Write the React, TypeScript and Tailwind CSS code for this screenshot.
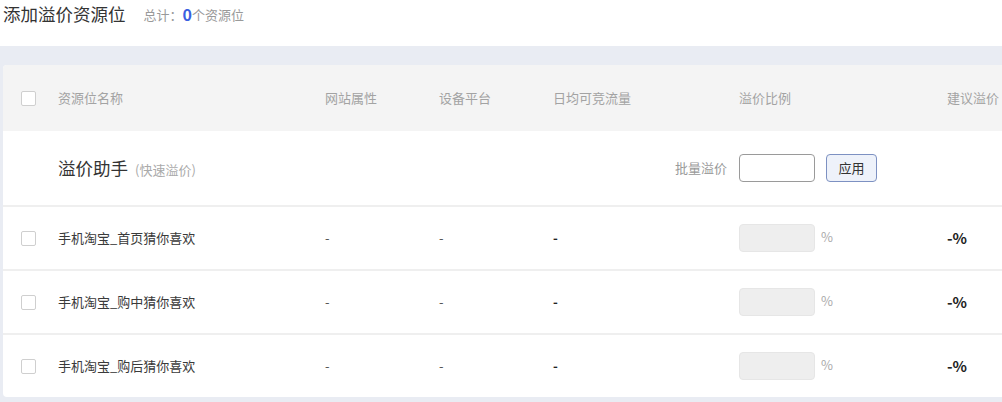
const font = { fontFamily: '"Noto Sans CJK SC", "Noto Sans", sans-serif' };

const rows = ['手机淘宝_首页猜你喜欢', '手机淘宝_购中猜你喜欢', '手机淘宝_购后猜你喜欢'];

const cols = 'grid grid-cols-[55px_267px_114px_114px_186px_208px_140px] items-center';

function Checkbox() {
  return <div className="ml-[18px] w-[15px] h-[15px] rounded-[2px] border border-[#cfcfcf] bg-white" />;
}

export default function App() {
  return (
    <div className="w-[1002px] h-[402px] overflow-hidden bg-white text-[#333]" style={font}>
      {/* Title */}
      <div className="h-[46px] pl-[3px] flex items-start pt-[1px]">
        <span className="text-[17.5px] leading-[26px] text-[#333]">添加溢价资源位</span>
        <span className="ml-[18px] mt-[1px] text-[13px] leading-[26px] text-[#999]">总计：</span>
        <span className="text-[16px] leading-[26px] font-bold text-[#3b5fe0]">0</span>
        <span className="mt-[1px] text-[13px] leading-[26px] text-[#999]">个资源位</span>
      </div>

      {/* Band + card */}
      <div className="bg-[#e9ecf3] pt-[19px] pl-[3px] pb-[3px] h-[356px]">
        <div className="w-[1100px] bg-white rounded-[4px] overflow-hidden">
          {/* Header */}
          <div className={`${cols} h-[66px] bg-[#f4f4f4] text-[13px] text-[#a3a3a3]`}>
            <Checkbox />
            <span>资源位名称</span>
            <span>网站属性</span>
            <span>设备平台</span>
            <span>日均可竞流量</span>
            <span>溢价比例</span>
            <span>建议溢价</span>
          </div>

          {/* Helper */}
          <div className={`${cols} h-[74px]`}>
            <div />
            <div className="flex items-baseline">
              <span className="text-[17.5px] text-[#333]">溢价助手</span>
              <span className="ml-[7px] text-[13px] text-[#aaa]">(快速溢价)</span>
            </div>
            <div />
            <div />
            <div className="flex justify-end pr-[12px] text-[13px] text-[#999]">批量溢价</div>
            <div className="flex items-center gap-[11px]">
              <div className="w-[76px] h-[28px] rounded-[4px] border border-[#9a9a9a] bg-white" />
              <button className="w-[51px] h-[28px] rounded-[4px] border border-[#7d91c2] bg-[#eef2fa] text-[13px] text-[#333]">
                应用
              </button>
            </div>
            <div />
          </div>

          {rows.map((name) => (
            <div key={name} className={`${cols} h-[64px] border-t-2 border-[#efefef] text-[13px]`}>
              <Checkbox />
              <span className="text-[#3a3a3a]">{name}</span>
              <span className="text-[#555]">-</span>
              <span className="text-[#555]">-</span>
              <span className="font-bold text-[#222]">-</span>
              <div className="flex items-center">
                <div className="w-[76px] h-[28px] rounded-[4px] border border-[#e6e6e6] bg-[#eeeeee]" />
                <span className="ml-[6px] -mt-[3px] text-[13px] text-[#aaa]">%</span>
              </div>
              <span className="text-[15px] font-bold text-[#222]">-%</span>
            </div>
          ))}
        </div>
      </div>
    </div>
  );
}
